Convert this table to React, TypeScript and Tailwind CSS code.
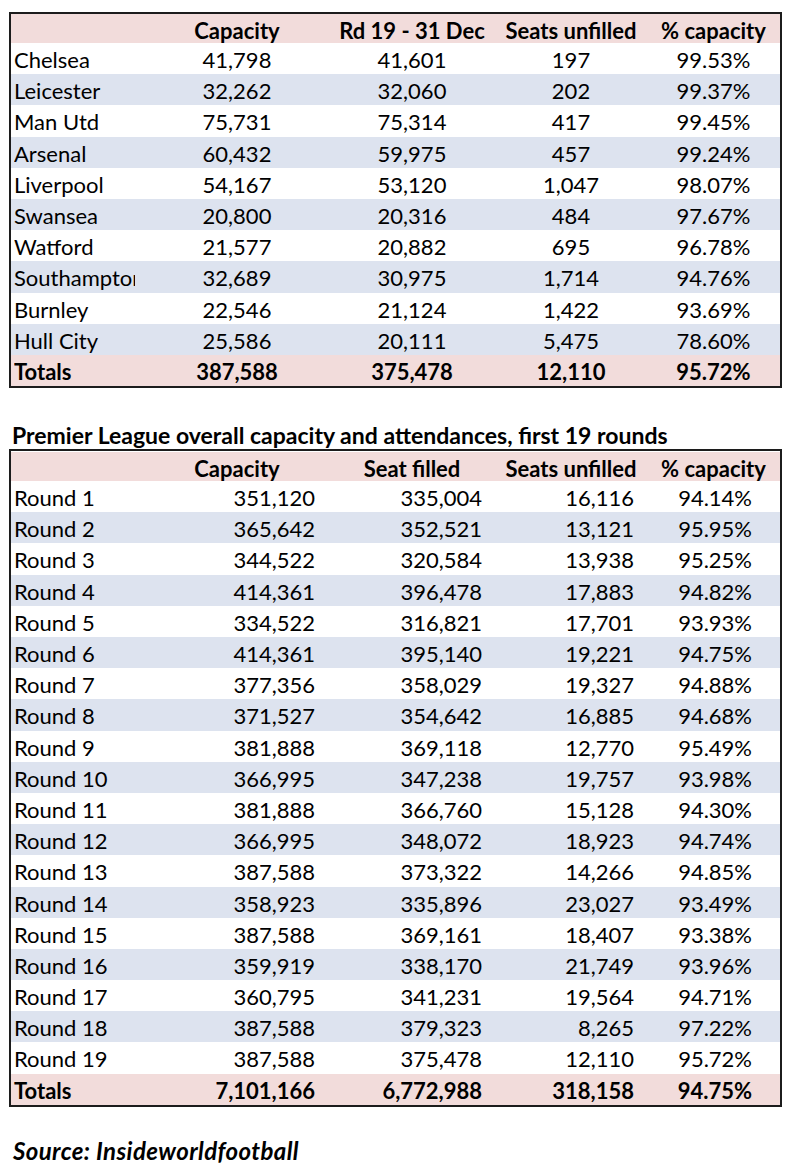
import React from 'react';

type Row = [string, string, string, string, string];

const clubs: Row[] = [
  ['Chelsea', '41,798', '41,601', '197', '99.53%'],
  ['Leicester', '32,262', '32,060', '202', '99.37%'],
  ['Man Utd', '75,731', '75,314', '417', '99.45%'],
  ['Arsenal', '60,432', '59,975', '457', '99.24%'],
  ['Liverpool', '54,167', '53,120', '1,047', '98.07%'],
  ['Swansea', '20,800', '20,316', '484', '97.67%'],
  ['Watford', '21,577', '20,882', '695', '96.78%'],
  ['Southampton', '32,689', '30,975', '1,714', '94.76%'],
  ['Burnley', '22,546', '21,124', '1,422', '93.69%'],
  ['Hull City', '25,586', '20,111', '5,475', '78.60%'],
];

const rounds: Row[] = [
  ['Round 1', '351,120', '335,004', '16,116', '94.14%'],
  ['Round 2', '365,642', '352,521', '13,121', '95.95%'],
  ['Round 3', '344,522', '320,584', '13,938', '95.25%'],
  ['Round 4', '414,361', '396,478', '17,883', '94.82%'],
  ['Round 5', '334,522', '316,821', '17,701', '93.93%'],
  ['Round 6', '414,361', '395,140', '19,221', '94.75%'],
  ['Round 7', '377,356', '358,029', '19,327', '94.88%'],
  ['Round 8', '371,527', '354,642', '16,885', '94.68%'],
  ['Round 9', '381,888', '369,118', '12,770', '95.49%'],
  ['Round 10', '366,995', '347,238', '19,757', '93.98%'],
  ['Round 11', '381,888', '366,760', '15,128', '94.30%'],
  ['Round 12', '366,995', '348,072', '18,923', '94.74%'],
  ['Round 13', '387,588', '373,322', '14,266', '94.85%'],
  ['Round 14', '358,923', '335,896', '23,027', '93.49%'],
  ['Round 15', '387,588', '369,161', '18,407', '93.38%'],
  ['Round 16', '359,919', '338,170', '21,749', '93.96%'],
  ['Round 17', '360,795', '341,231', '19,564', '94.71%'],
  ['Round 18', '387,588', '379,323', '8,265', '97.22%'],
  ['Round 19', '387,588', '375,478', '12,110', '95.72%'],
];

// header + club table share the centred column layout
const centerCols = 'grid grid-cols-[166px_120px_230px_88px_32px_133px]';
// rounds table values sit flush right
const rightCols = 'grid grid-cols-[189px_115px_167px_152px_118px_28px]';

function HeaderRow({ cols }: { cols: string[] }) {
  return (
    <div className={`${centerCols} h-[29px] bg-[#f2dcdb] font-bold`}>
      <div />
      <div className="flex items-center justify-center whitespace-nowrap">{cols[0]}</div>
      <div className="flex items-center justify-center whitespace-nowrap">{cols[1]}</div>
      <div className="flex items-center justify-center whitespace-nowrap">{cols[2]}</div>
      <div />
      <div className="flex items-center justify-center whitespace-nowrap">{cols[3]}</div>
    </div>
  );
}

function CenterRow({ row, bg, bold }: { row: Row; bg: string; bold?: boolean }) {
  return (
    <div className={`${centerCols} h-[31.2px] ${bg} ${bold ? 'font-bold' : ''}`}>
      {/* label cell clips like the spreadsheet column does */}
      <div className="flex items-center pl-[3px]">
        <span className="block w-[121px] overflow-hidden whitespace-nowrap">{row[0]}</span>
      </div>
      <div className="flex items-center justify-center">{row[1]}</div>
      <div className="flex items-center justify-center">{row[2]}</div>
      <div className="flex items-center justify-center">{row[3]}</div>
      <div />
      <div className="flex items-center justify-center">{row[4]}</div>
    </div>
  );
}

function RightRow({ row, bg, bold }: { row: Row; bg: string; bold?: boolean }) {
  return (
    <div className={`${rightCols} h-[31.2px] ${bg} ${bold ? 'font-bold' : ''}`}>
      <div className="flex items-center pl-[3px] whitespace-nowrap">{row[0]}</div>
      <div className="flex items-center justify-end">{row[1]}</div>
      <div className="flex items-center justify-end">{row[2]}</div>
      <div className="flex items-center justify-end">{row[3]}</div>
      <div className="flex items-center justify-end">{row[4]}</div>
      <div />
    </div>
  );
}

export default function App() {
  return (
    <div
      className="w-[788px] h-[1176px] bg-white text-black text-[22px] pt-[12px]"
      style={{ fontFamily: 'Lato, "Open Sans", sans-serif' }}
    >
      {/* Club table */}
      <div className="ml-[9px] w-[773px] border-2 border-[#1c1c1c]">
        <HeaderRow cols={['Capacity', 'Rd 19 - 31 Dec', 'Seats unfilled', '% capacity']} />
        {clubs.map((r, i) => (
          <CenterRow key={r[0]} row={r} bg={i % 2 === 0 ? 'bg-white' : 'bg-[#dde3ef]'} />
        ))}
        <CenterRow row={['Totals', '387,588', '375,478', '12,110', '95.72%']} bg="bg-[#f2dcdb]" bold />
      </div>

      <div className="mt-[33px] ml-[12px] h-[28px] leading-[28px] text-[23px] font-bold whitespace-nowrap">
        Premier League overall capacity and attendances, first 19 rounds
      </div>

      {/* Rounds table */}
      <div className="ml-[9px] w-[773px] border-2 border-[#1c1c1c]">
        <div className="h-[1px]" />
        <HeaderRow cols={['Capacity', 'Seat filled', 'Seats unfilled', '% capacity']} />
        {rounds.map((r, i) => (
          <RightRow key={r[0]} row={r} bg={i % 2 === 0 ? 'bg-white' : 'bg-[#dde3ef]'} />
        ))}
        <RightRow row={['Totals', '7,101,166', '6,772,988', '318,158', '94.75%']} bg="bg-[#f2dcdb]" bold />
      </div>

      <div className="mt-[30px] ml-[13px] h-[28px] leading-[28px] text-[24px] tracking-[0.4px] font-bold italic">
        Source: Insideworldfootball
      </div>
    </div>
  );
}
